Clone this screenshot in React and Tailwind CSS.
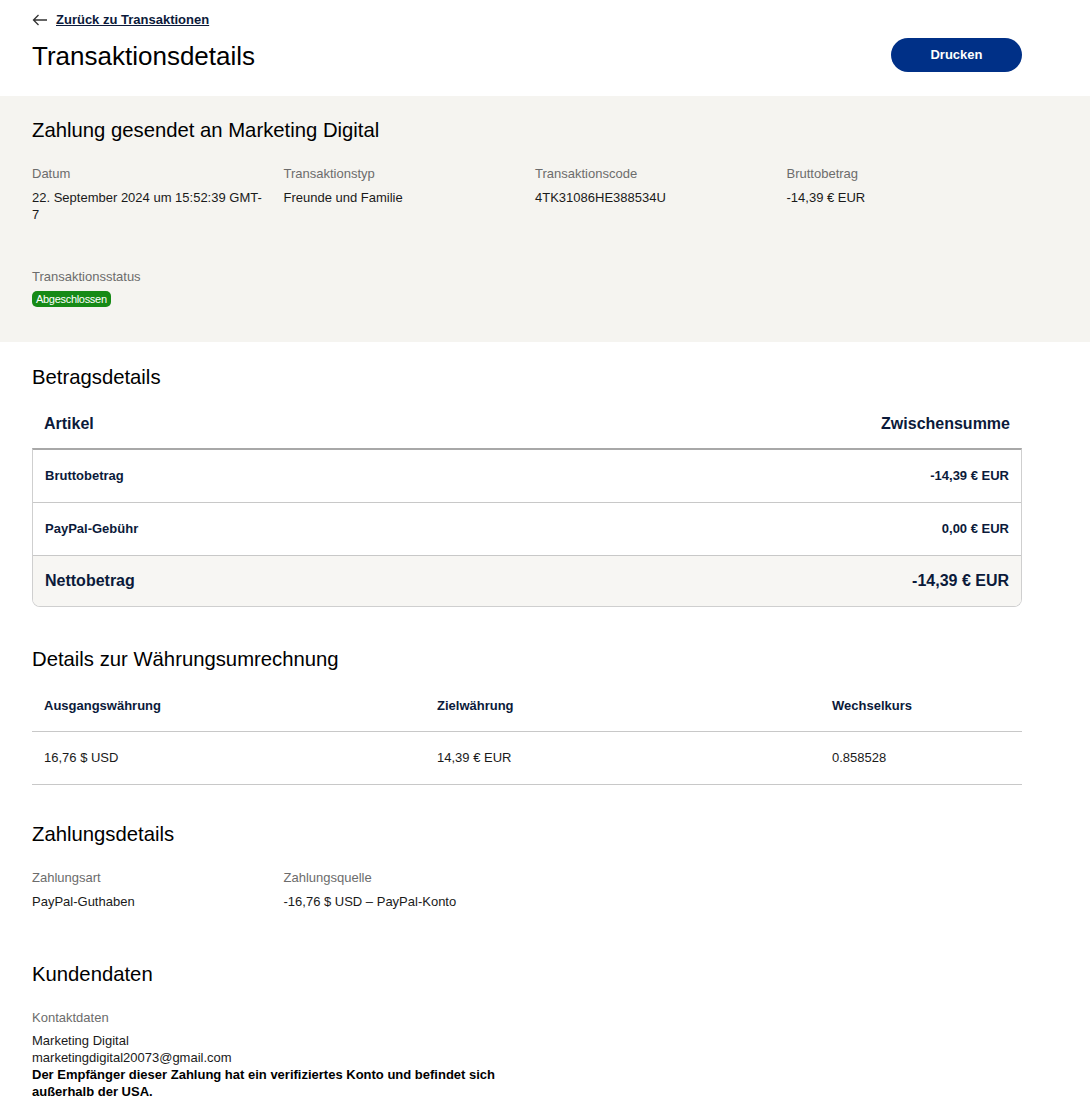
import React from 'react';

const font = { fontFamily: '"Liberation Sans", Arial, sans-serif' };

const Field = ({ label, children }) => (
  <div>
    <div className="text-[13px] leading-[17px] text-[#6c6c6c]">{label}</div>
    <div className="mt-[7px] text-[13px] leading-[17px] text-[#1a1a1a]">{children}</div>
  </div>
);

const ArrowLeft = () => (
  <svg width="16" height="12" viewBox="0 0 16 12" fill="none" stroke="#333" strokeWidth="1.3">
    <path d="M15 6H1.5M6.5 1L1.5 6l5 5" />
  </svg>
);

export default function App() {
  return (
    <div className="min-h-screen bg-white text-[#111]" style={font}>
      {/* header */}
      <div className="px-8 pt-[12px] pb-[24px]">
        <a href="#" className="flex items-center gap-2 text-[13px] font-bold text-[#0b1a3a] underline leading-[16px]">
          <ArrowLeft />
          Zurück zu Transaktionen
        </a>
        <div className="flex items-center justify-between w-[990px] mt-[10px]">
          <h1 className="text-[26px] leading-[34px] text-black translate-y-[1px]">Transaktionsdetails</h1>
          <button className="w-[131px] h-[34px] rounded-full bg-[#003087] text-white text-[13px] font-bold">
            Drucken
          </button>
        </div>
      </div>

      {/* summary band */}
      <div className="bg-[#f5f4f0] px-8 pt-[21px] pb-[32px]">
        <h2 className="text-[20.3px] leading-[26px] text-black">Zahlung gesendet an Marketing Digital</h2>
        <div className="grid grid-cols-4 gap-4 w-[990px] mt-[22px]">
          <Field label="Datum">22. September 2024 um 15:52:39 GMT-7</Field>
          <Field label="Transaktionstyp">Freunde und Familie</Field>
          <Field label="Transaktionscode">4TK31086HE388534U</Field>
          <Field label="Bruttobetrag">-14,39 € EUR</Field>
        </div>
        <div className="mt-[45px]">
          <div className="text-[13px] leading-[17px] text-[#6c6c6c]">Transaktionsstatus</div>
          <span className="inline-block mt-[6px] px-[4px] py-[1px] rounded-[5px] bg-[#168a16] text-white text-[11px] leading-[14px] tracking-[-0.3px]">
            Abgeschlossen
          </span>
        </div>
      </div>

      {/* amount details */}
      <div className="px-8 w-[1054px]">
        <h2 className="text-[20.3px] leading-[26px] text-black mt-[22px]">Betragsdetails</h2>
        <div className="flex justify-between px-3 mt-[24px] pb-[14px] text-[16px] font-bold text-[#0b1a3a] leading-[20px]">
          <span>Artikel</span>
          <span>Zwischensumme</span>
        </div>
        <div className="border border-[#cfcfcf] border-t-2 border-t-[#a8a8a8] rounded-b-[8px] overflow-hidden">
          <div className="flex justify-between items-center px-3 h-[53px] text-[13px] font-bold text-[#0b1a3a] border-b border-[#c8c8c8]">
            <span>Bruttobetrag</span>
            <span>-14,39 € EUR</span>
          </div>
          <div className="flex justify-between items-center px-3 h-[53px] text-[13px] font-bold text-[#0b1a3a] border-b border-[#c8c8c8]">
            <span>PayPal-Gebühr</span>
            <span>0,00 € EUR</span>
          </div>
          <div className="flex justify-between items-center px-3 h-[50px] text-[16px] font-bold text-[#0b1a3a] bg-[#f7f6f3]">
            <span>Nettobetrag</span>
            <span>-14,39 € EUR</span>
          </div>
        </div>

        {/* currency conversion */}
        <h2 className="text-[20.3px] leading-[26px] text-black mt-[39px]">Details zur Währungsumrechnung</h2>
        <div className="mt-[8px]">
          <div className="grid grid-cols-[393px_395px_1fr] h-[52px] items-center border-b border-[#c8c8c8] text-[13px] font-bold text-[#0b1a3a]">
            <span className="px-3">Ausgangswährung</span>
            <span className="px-3">Zielwährung</span>
            <span className="px-3">Wechselkurs</span>
          </div>
          <div className="grid grid-cols-[393px_395px_1fr] h-[53px] items-center border-b border-[#c8c8c8] text-[13px] text-[#1a1a1a]">
            <span className="px-3">16,76 $ USD</span>
            <span className="px-3">14,39 € EUR</span>
            <span className="px-3">0.858528</span>
          </div>
        </div>

        {/* payment details */}
        <h2 className="text-[20.3px] leading-[26px] text-black mt-[36px]">Zahlungsdetails</h2>
        <div className="grid grid-cols-4 gap-4 w-[990px] mt-[22px]">
          <Field label="Zahlungsart">PayPal-Guthaben</Field>
          <Field label="Zahlungsquelle">-16,76 $ USD – PayPal-Konto</Field>
        </div>

        {/* customer */}
        <h2 className="text-[20.3px] leading-[26px] text-black mt-[51px]">Kundendaten</h2>
        <div className="mt-[22px]">
          <div className="text-[13px] leading-[17px] text-[#6c6c6c]">Kontaktdaten</div>
          <div className="mt-[6px] text-[13px] leading-[17px] text-[#1a1a1a] w-[480px]">
            <div>Marketing Digital</div>
            <div>marketingdigital20073@gmail.com</div>
            <div className="font-bold text-black">
              Der Empfänger dieser Zahlung hat ein verifiziertes Konto und befindet sich außerhalb der USA.
            </div>
          </div>
        </div>
      </div>
    </div>
  );
}
